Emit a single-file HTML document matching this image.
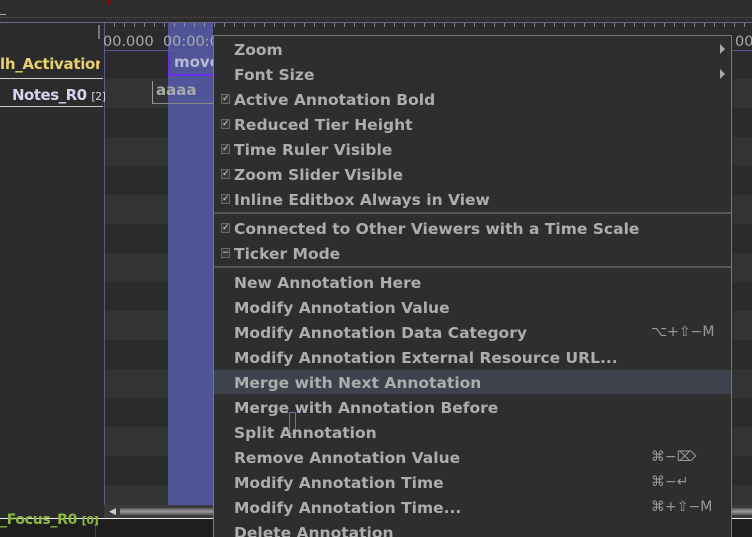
<!DOCTYPE html>
<html><head><meta charset="utf-8"><style>
*{margin:0;padding:0;box-sizing:border-box}
html,body{width:752px;height:537px;overflow:hidden}
body{background:#2b2b2b;font-family:"DejaVu Sans","Liberation Sans",sans-serif;position:relative}
.a{position:absolute}
.menu{left:213px;top:35px;width:519px;height:502px;background:#2e2e2e;border:1px solid #777;border-bottom:none;overflow:hidden}
.it{position:absolute;left:20px;font-size:15.5px;font-weight:bold;color:#adadad;white-space:nowrap;line-height:20px}
.ck{position:absolute;left:7px;width:9px;height:10px;border:1px solid #666;background:#3a3a3a;color:#ddd;font-size:9px;line-height:8px;text-align:center}
.sc{position:absolute;font-size:14px;color:#999;white-space:nowrap}
.sep{position:absolute;left:0;right:0;height:2px;background:#555}
</style></head><body>
<div class="a" style="left:0;top:0;width:752px;height:22px;background:#2d2d2d"></div>
<div class="a" style="left:0;top:17px;width:752px;height:1px;border-top:1px dotted #555"></div>
<div class="a" style="left:0;top:14px;width:6px;height:1px;background:#aaa"></div>
<div class="a" style="left:108px;top:0;width:1px;height:5px;background:#a00"></div>
<div class="a" style="left:0;top:22px;width:752px;height:1px;background:#6a6a90"></div>
<div class="a" style="left:104px;top:23px;width:648px;height:482px;background:repeating-linear-gradient(#333 0 29px,#2b2b2b 29px 58px);background-position:0 56px"></div>
<div class="a" style="left:104px;top:23px;width:648px;height:27px;background:#2b2b2b"></div>
<div class="a" style="left:104px;top:50px;width:648px;height:29px;background:#2b2b2b"></div>
<div class="a" style="left:168px;top:23px;width:45px;height:482px;background:#4f5597"></div>
<div class="a" style="left:104px;top:23px;width:648px;height:4px;background:repeating-linear-gradient(90deg,#aaa 0 1px,transparent 1px 10px);opacity:.7"></div>
<div class="a" style="left:104px;top:23px;width:1px;height:482px;background:#5a5a8a"></div>
<div class="a" style="left:104px;top:50px;width:648px;height:1px;background:#5a5a9a"></div>
<div class="a" style="left:98px;top:25px;width:2px;height:14px;border-left:1px solid #777;border-right:1px solid #777"></div>
<div class="a" style="left:103px;top:34px;font-size:14.5px;color:#aaa;white-space:nowrap">00.000&nbsp; 00:00:0</div>
<div class="a" style="left:735px;top:34px;font-size:14.5px;color:#aaa">00</div>
<div class="a" style="left:168px;top:53px;width:45px;height:23px;border-left:2px solid #6a2cf0;border-bottom:2px solid #6a2cf0;color:#b8b8d8;font-size:15px;font-weight:bold;padding-left:4px;overflow:hidden;white-space:nowrap">move</div>
<div class="a" style="left:152px;top:81px;width:61px;height:23px;border-left:1px solid #999;border-bottom:1px solid #888;color:#aaa;font-size:15px;font-weight:bold;padding-left:3px">aaaa</div>
<div class="a" style="left:0;top:50px;width:100px;height:28px;overflow:hidden"><div class="a" style="left:0;top:5px;font-size:15px;font-weight:bold;color:#e8d070;white-space:nowrap;letter-spacing:-0.3px">lh_Activation_</div></div>
<div class="a" style="left:0;top:78px;width:103px;height:1px;background:#ccc"></div>
<div class="a" style="left:12px;top:86px;font-size:15px;font-weight:bold;color:#d8d0f0;white-space:nowrap;letter-spacing:-0.5px">Notes_R0 <span style="font-size:11px;font-weight:normal">[2]</span></div>
<div class="a" style="left:0;top:106px;width:103px;height:1px;background:#ccc"></div>
<div class="a" style="left:104px;top:505px;width:648px;height:13px;background:#3a3a3a"></div>
<div class="a" style="left:120px;top:508px;width:632px;height:7px;background:linear-gradient(#555,#999,#555)"></div>
<div class="a" style="left:109px;top:507px;font-size:9px;color:#ccc">◀</div>
<div class="a" style="left:0;top:518px;width:752px;height:1px;background:#eee"></div>
<div class="a" style="left:0;top:519px;width:752px;height:18px;background:#1e1e1e"></div>
<div class="a" style="left:95px;top:519px;width:1px;height:18px;background:#a02020"></div>
<div class="a" style="left:0;top:512px;font-size:14px;font-weight:bold;color:#8ab840;white-space:nowrap;letter-spacing:-0.3px">_Focus_R0 <span style="font-size:11px">[0]</span></div>
<div class="a menu">
<div class="it" style="top:4px">Zoom</div><div class="a" style="left:506px;top:8px;width:0;height:0;border-left:5px solid #aaa;border-top:5px solid transparent;border-bottom:5px solid transparent"></div>
<div class="it" style="top:29px">Font Size</div><div class="a" style="left:506px;top:33px;width:0;height:0;border-left:5px solid #aaa;border-top:5px solid transparent;border-bottom:5px solid transparent"></div>
<div class="ck" style="top:58px">✓</div><div class="it" style="top:54px">Active Annotation Bold</div>
<div class="ck" style="top:83px">✓</div><div class="it" style="top:79px">Reduced Tier Height</div>
<div class="ck" style="top:108px">✓</div><div class="it" style="top:104px">Time Ruler Visible</div>
<div class="ck" style="top:133px">✓</div><div class="it" style="top:129px">Zoom Slider Visible</div>
<div class="ck" style="top:158px">✓</div><div class="it" style="top:154px">Inline Editbox Always in View</div>
<div class="sep" style="top:176px"></div>
<div class="ck" style="top:187px">✓</div><div class="it" style="top:183px">Connected to Other Viewers with a Time Scale</div>
<div class="ck" style="top:212px">−</div><div class="it" style="top:208px">Ticker Mode</div>
<div class="sep" style="top:230px"></div>
<div class="it" style="top:237px">New Annotation Here</div>
<div class="it" style="top:262px">Modify Annotation Value</div>
<div class="it" style="top:287px">Modify Annotation Data Category</div><div class="sc" style="left:437px;top:288px">⌥+⇧−M</div>
<div class="it" style="top:312px">Modify Annotation External Resource URL...</div>
<div class="a" style="left:0;top:334px;width:517px;height:24px;background:#3d424c"></div>
<div class="it" style="top:337px">Merge with Next Annotation</div>
<div class="it" style="top:362px">Merge with Annotation Before</div>
<div class="a" style="left:75px;top:376px;width:7px;height:22px;border:1px solid #6a70b0"></div>
<div class="it" style="top:387px">Split Annotation</div>
<div class="it" style="top:412px">Remove Annotation Value</div><div class="sc" style="left:437px;top:413px">⌘−⌦</div>
<div class="it" style="top:437px">Modify Annotation Time</div><div class="sc" style="left:437px;top:438px">⌘−↵</div>
<div class="it" style="top:462px">Modify Annotation Time...</div><div class="sc" style="left:437px;top:463px">⌘+⇧−M</div>
<div class="it" style="top:487px">Delete Annotation</div>
</div>
</body></html>
